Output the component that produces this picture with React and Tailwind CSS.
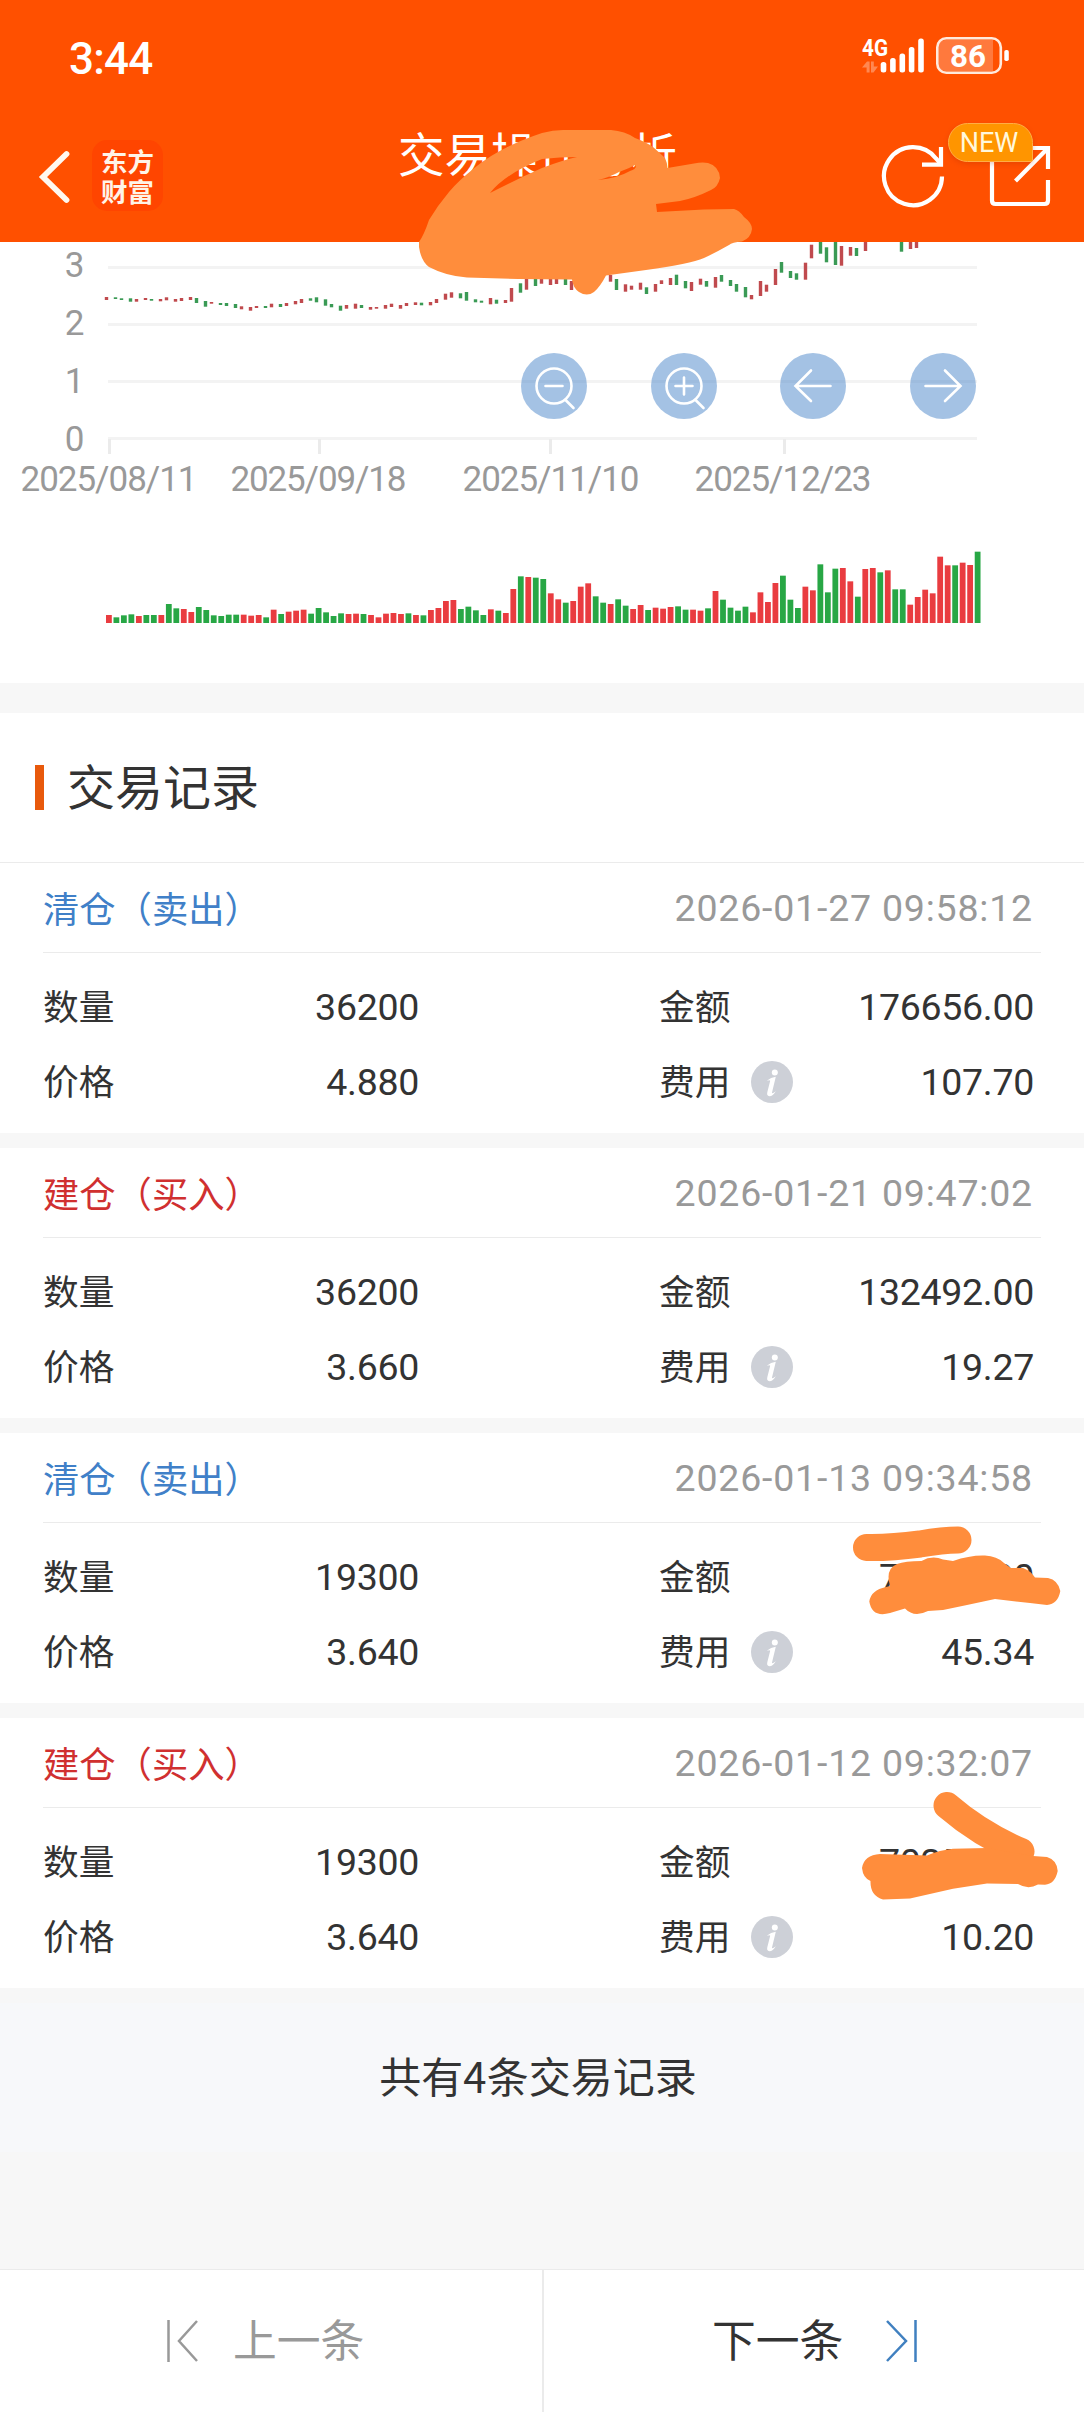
const RED = "#c04a4e";
const GREEN = "#3a9a55";

// Candle bodies: [day index, rising (r) or falling (g), top, bottom]
const candles = [
  [0, "r", 297, 300], [1, "g", 297.3, 299], [2, "g", 298.3, 300], [3, "g", 298.3, 301.7], [4, "r", 299, 301.7],
  [5, "r", 298, 300], [6, "g", 299, 300.7], [7, "r", 299, 301.3], [8, "r", 297.3, 300.3], [9, "r", 299, 301.7],
  [10, "r", 298, 301], [11, "r", 297, 300], [12, "g", 298, 303], [13, "g", 301, 306.7], [14, "r", 302, 303.7],
  [15, "g", 303, 305], [16, "g", 303, 306], [17, "g", 304, 308], [18, "r", 306.3, 309.3], [19, "r", 307, 310.7],
  [20, "r", 306, 308], [21, "g", 306, 308], [22, "r", 303.7, 307.3], [23, "g", 304, 307], [24, "r", 303, 306],
  [25, "r", 301, 304.3], [26, "r", 299, 303], [27, "g", 298.3, 300.7], [28, "g", 297.3, 302.3], [29, "g", 299.3, 305.7],
  [30, "g", 304, 307.3], [31, "g", 305.7, 310.7], [32, "r", 305, 308.7], [33, "r", 303.7, 308.7], [34, "g", 305, 308],
  [35, "r", 307, 309.7], [36, "r", 307, 308.7], [37, "r", 305, 308.7], [38, "r", 303.7, 307], [39, "r", 305, 308.7],
  [40, "r", 303, 306], [41, "r", 302.3, 305], [42, "g", 302.7, 305.3], [43, "r", 302, 305.3], [44, "r", 299, 303],
  [45, "r", 293.7, 299.7], [46, "r", 292.3, 297.7], [47, "g", 293.3, 298.3], [48, "g", 292, 300.7], [49, "g", 299.3, 302.3],
  [50, "g", 300.7, 302.7], [51, "r", 298, 304.3], [52, "g", 299.7, 303.7], [53, "r", 300, 303], [54, "r", 288, 301.7],
  [55, "g", 283.3, 292.7], [56, "r", 278, 289.7], [57, "g", 279, 286], [58, "r", 278, 283.7], [59, "r", 279, 285],
  [60, "r", 279, 284], [61, "g", 279, 285], [62, "r", 281, 290], [67, "r", 275, 281.7], [68, "g", 279, 290],
  [69, "r", 284.3, 291.7], [70, "r", 285.7, 289.7], [71, "r", 282.7, 289.7], [72, "g", 287.3, 294], [73, "r", 284, 291.7],
  [74, "r", 280.3, 284], [75, "r", 278, 285], [76, "g", 274.7, 285], [77, "g", 281, 288.3], [78, "r", 282, 291],
  [79, "r", 278.7, 284.7], [80, "g", 281, 286.7], [81, "r", 277, 287.7], [82, "g", 275, 281.7], [83, "g", 280, 286],
  [84, "g", 284, 291.7], [85, "g", 287, 297.3], [86, "r", 295, 299.3], [87, "r", 281, 296], [88, "r", 284.7, 291.7],
  [89, "r", 269, 285], [90, "g", 262, 272.7], [91, "g", 271, 278], [92, "g", 273.3, 279.7], [93, "r", 262.7, 279.7],
  [94, "r", 244.7, 258.3], [95, "g", 242, 253.7], [96, "g", 247.3, 262.3], [97, "g", 242, 265], [98, "r", 246, 265.7],
  [99, "r", 247, 255.7], [100, "g", 248, 256], [101, "r", 242, 251], [106, "g", 242, 251.7], [107, "r", 242, 249], [108, "r", 242, 248],
];

// Daily volume: colour plus bar height in thirds of a pixel
const volume =
  "r24 g17 g23 g26 r21 g24 g24 r24 g57 g44 r42 r33 g48 g39 g23 g21 g25 g25 r25 r22 r24 g17 r40 g27 r34 r37 r40 g28 g45 g32 g21 g29 r27 r28 g27 r24 r17 r28 r30 r27 g29 r24 g23 r39 r45 r66 r69 g42 g49 g38 g24 r41 g37 r30 r102 g140 r138 g136 g132 r89 r71 g61 r66 r109 r119 g80 g61 r57 g71 g52 r42 r54 g39 r46 r43 r48 g50 g40 r40 r37 g44 r96 g70 g46 g37 g49 r32 r92 r63 r120 g142 g70 g45 r109 r98 g176 g92 g163 r165 r125 g79 r162 r165 g152 r158 g101 g101 r55 r78 r100 r89 r199 r173 g173 r181 r174 g214".split(" ");

const records = [
  { kind: "sell", time: "2026-01-27 09:58:12", qty: "36200", amount: "176656.00", price: "4.880", fee: "107.70" },
  { kind: "buy", time: "2026-01-21 09:47:02", qty: "36200", amount: "132492.00", price: "3.660", fee: "19.27" },
  { kind: "sell", time: "2026-01-13 09:34:58", qty: "19300", amount: "70252.00", price: "3.640", fee: "45.34" },
  { kind: "buy", time: "2026-01-12 09:32:07", qty: "19300", amount: "70252.00", price: "3.640", fee: "10.20" },
];

function StatusBar() {
  return (
    <div className="flex h-[112px] items-center justify-between pl-[69px] pr-[74px]">
      <div className="pt-[5px] font-[Roboto] text-[44px] font-medium leading-none tracking-[-0.8px]">3:44</div>
      <svg width="150" height="44" viewBox="861 34 150 44" fill="#fff">
        <text x="863" y="56" fontFamily="Roboto" fontWeight="700" fontSize="23" textLength="26" lengthAdjust="spacingAndGlyphs">4G</text>
        <g fill="#fff" fillOpacity=".32">
          <path d="M863 67.500 868 61.500h2.600V72.500h-3v-5zM872 61.500h2.800v5h4.200L874.500 72.500H872z" />
        </g>
        <rect x="881.7" y="62" width="5.6" height="10.5" rx="2.5" />
        <rect x="891.1" y="58" width="5.6" height="14.5" rx="2.5" />
        <rect x="900.5" y="53.5" width="5.6" height="19" rx="2.5" />
        <rect x="909.8" y="47" width="5.6" height="25.5" rx="2.5" />
        <rect x="919.2" y="38.5" width="5.6" height="34" rx="2.5" />
        <path d="M946 40h48v31h-48a6.500 6.500 0 0 1-6.500-6.500v-18a6.500 6.500 0 0 1 6.500-6.500z" fillOpacity=".24" />
        <rect x="938.300" y="38.200" width="63.500" height="34.500" rx="9" fill="none" stroke="#ffeadd" strokeWidth="2.600" />
        <rect x="1005.300" y="50" width="4.500" height="11" rx="1.800" />
        <text x="951" y="67" fontFamily="Roboto" fontWeight="700" fontSize="32" textLength="36" lengthAdjust="spacingAndGlyphs">86</text>
      </svg>
    </div>
  );
}

function TitleBar() {
  return (
    <div className="relative flex h-[130px] items-start">
      <svg className="ml-[36px] mt-[36px] shrink-0" width="36" height="58" viewBox="36 148 36 58" fill="none" stroke="#fff8f0" strokeWidth="5.800">
        <path d="M66.500 154 43 177 66.500 200" strokeLinecap="round" />
      </svg>
      <div className="ml-[20px] mt-[28px] flex h-[71px] w-[71px] shrink-0 items-center justify-center rounded-[15px] bg-[#ff4500] text-[26.500px] font-bold leading-[29.500px] text-[#fff4e8]">
        <span className="w-[53px] break-all">东方财富</span>
      </div>
      <h1 className="ml-[235px] mt-[7px] w-[300px] shrink-0 whitespace-nowrap text-[46.500px] font-normal leading-[66px]">交易操作分析</h1>
      <svg className="ml-[181px] mt-[28px] shrink-0" width="70" height="70" viewBox="879 140 70 70" fill="none" stroke="#fff" strokeWidth="4.200">
        <path d="M942 176.500A29 29 0 1 1 936 158.500L941 164" />
        <path d="M941 147v17.700h-19" />
      </svg>
      <svg className="ml-[37px] mt-[28px] shrink-0" width="68" height="70" viewBox="986 140 68 70" fill="none" stroke="#fff" strokeWidth="4.200">
        <path d="M1016 148h-20q-4 0-4 4v48.500q0 3.500 3.500 3.500h49q3.500 0 3.500-3.500V180" />
        <path d="M1028 148h20v21M1048 148l-32.500 33" />
      </svg>
      <span className="absolute left-[948px] top-[11px] flex h-[39px] w-[85px] items-center justify-center rounded-[20px] rounded-br-[2px] border border-[#ffad45] bg-[#ff9500] pr-[3px] pt-[1px] font-[Roboto] text-[27px] leading-none text-[#fff8dc] shadow-[0_2px_5px_rgba(170,40,0,0.25)]">
        NEW
      </span>
    </div>
  );
}

function RoundButton({ x, children }) {
  return (
    <g transform={`translate(${x} 386)`} fill="none" stroke="#fff" strokeWidth="2.600" strokeLinecap="round">
      <circle r="33" fill="#4a86c9" fillOpacity=".5" stroke="none" />
      {children}
    </g>
  );
}

function Chart() {
  return (
    <svg className="block bg-white" width="1084" height="441" viewBox="0 242 1084 441">
      <g fill="#f3f3f3">
        <rect x="108" y="266" width="869" height="3" />
        <rect x="108" y="323" width="869" height="3" />
        <rect x="108" y="380" width="869" height="3" />
        <rect x="108" y="437" width="869" height="3" />
      </g>
      <g fill="#ebebeb">
        <rect x="108" y="439" width="3" height="15" />
        <rect x="318" y="439" width="3" height="15" />
        <rect x="549" y="439" width="3" height="15" />
        <rect x="783" y="439" width="3" height="15" />
      </g>
      <g fontFamily="Roboto" fontSize="35" fill="#999">
        <text x="84.500" y="277" textAnchor="end">3</text>
        <text x="84.500" y="335" textAnchor="end">2</text>
        <text x="84.500" y="393" textAnchor="end">1</text>
        <text x="84.500" y="451" textAnchor="end">0</text>
        <text x="20.500" y="491" textLength="177">2025/08/11</text>
        <text x="230.500" y="491" textLength="176">2025/09/18</text>
        <text x="462.500" y="491" textLength="177">2025/11/10</text>
        <text x="694.500" y="491" textLength="177">2025/12/23</text>
      </g>
      {candles.map(([i, c, top, bottom]) => (
        <rect key={i} x={104.8 + 3 * Math.round(i * 2.5)} y={top} width="3.400" height={bottom - top} fill={c === "r" ? RED : GREEN} />
      ))}
      {volume.map((v, i) => {
        const h = Number(v.slice(1)) / 3;
        return <rect key={i} x={106 + i * 7.489} y={623 - h} width="5.800" height={h} fill={v[0] === "r" ? "#e93c40" : "#28a745"} />;
      })}
      <RoundButton x={554}>
        <circle cx="0" r="17.500" />
        <path d="M-8.500 0h17M11.500 14l8 8" />
      </RoundButton>
      <RoundButton x={684}>
        <circle r="17.500" />
        <path d="M-8.500 0h17M0-8.500v17M11.500 14l8 8" />
      </RoundButton>
      <RoundButton x={813}>
        <path d="M-2-15.500-17.500 0-2 15M-17.500 0h35" />
      </RoundButton>
      <RoundButton x={943}>
        <path d="M2-15.500 17.500 0 2 15M17.500 0h-35" />
      </RoundButton>
    </svg>
  );
}

function InfoIcon() {
  return (
    <svg className="ml-[21px]" width="42" height="42" viewBox="0 0 42 42">
      <circle cx="21" cy="21" r="21" fill="#cdd0d7" />
      <circle cx="23.800" cy="11.500" r="3" fill="#fff" />
      <path d="M15.800 19.800Q20 16.500 24.800 15.800L21 31.500Q20.800 33.300 24.800 30.200 22 35.200 18.300 35.200 15.500 35 16.300 31.300L19.200 19.800Q19 18.800 15.800 19.800Z" fill="#fff" />
    </svg>
  );
}

function Num({ children }) {
  return <span className="font-[Roboto] text-[37.500px] tracking-[-0.300px]">{children}</span>;
}

function Label({ children }) {
  return <span className="pb-[3px]">{children}</span>;
}

function Record({ record }) {
  const sell = record.kind === "sell";
  return (
    <article className="h-[270px] bg-white text-[35.700px] leading-[72px] text-[#333]">
      <div className="ml-[43px] mr-[43px] flex h-[90px] items-center justify-between border-b border-[#ebebeb] pr-[8px]">
        <span className={sell ? "pb-[2px] text-[36.300px] text-[#4080c8]" : "pb-[2px] text-[36.300px] text-[#d03030]"}>{sell ? "清仓（卖出）" : "建仓（买入）"}</span>
        <span className="font-[Roboto] text-[37.500px] tracking-[0.800px] text-[#999]">{record.time}</span>
      </div>
      <div className="ml-[43px] mr-[50px] grid grid-cols-[376px_615px] justify-between pt-[16px]">
        <div className="flex h-[75px] items-center justify-between">
          <Label>数量</Label>
          <Num>{record.qty}</Num>
        </div>
        <div className="flex h-[75px] items-center justify-between pl-[240px]">
          <Label>金额</Label>
          <Num>{record.amount}</Num>
        </div>
        <div className="flex h-[75px] items-center justify-between">
          <Label>价格</Label>
          <Num>{record.price}</Num>
        </div>
        <div className="flex h-[75px] items-center pl-[240px]">
          <Label>费用</Label>
          <InfoIcon />
          <span className="ml-auto flex"><Num>{record.fee}</Num></span>
        </div>
      </div>
    </article>
  );
}

function Scribbles() {
  return (
    <svg className="pointer-events-none absolute left-0 top-0" width="1084" height="2412" viewBox="0 0 1084 2412" fill="#ff8d3c">
      <path
        fillRule="evenodd"
        d="M542 133Q553 130 563 130H611Q625 131 635 138Q646 142 653 147Q662 155 665 158Q667 162 667.500 168L694 163.500Q702 162 708 163Q719 166 720 178Q718 187 711 190Q695 198 680 201L656 204 657 212 704 209.500 734 209Q739 210 744 217Q752 223 752 229Q751 238 742 241.500Q732 242 729 245Q715 253 704 258Q690 264 646 270L606 275.500Q600 287 594 292Q587 297 579 292Q573 288 572 279.500L518 279 467 277.500Q446 276 429 267Q421 261 419 247V242Q424 235 429 220Q438 205 449 192Q458 181 475 167.500Q500 147 542 133ZM490 193Q505 174 542 159Q560 157 577 157Q563 160 542 168Q515 180 490 193ZM598 180Q610 177 619 172Q630 168 635 165Q638 168 630 171Q618 178 598 180Z"
      />
      <g fill="none" stroke="#ff8d3c" strokeWidth="27" strokeLinecap="round">
        <path d="M866.500 1547.500Q890 1548 920 1544 943 1540 958 1540" />
        <path d="M947 1805.500Q980 1834 1021 1851.500" />
      </g>
      <path d="M869.300 1601.500Q871 1590 886 1587L890 1586Q885 1569 897 1564Q905 1561 921.500 1561Q932 1555 943 1559.500L953 1561Q970 1555 985 1555.500Q997 1556 1004 1563L1011 1568 1023 1568Q1031 1571 1035 1577.500L1048 1578Q1058 1580 1060.300 1591Q1058 1604 1047 1605L1030 1603 995 1599 967 1605 943 1610 928 1611Q914 1618 905 1608.500L890 1613Q872 1618 869.300 1601.500Z" />
      <path d="M862 1868Q864 1855 880 1854L927 1855.500Q940 1850 953 1848.700L987 1848 1033 1856 1047 1857Q1057 1860 1057.700 1871Q1055 1884 1045 1884.700L1038 1884.500Q1028 1890 1018 1884L987 1883.500 953 1888.700 910 1898.500 883 1899.500Q870 1896 870.500 1881Q863 1878 862 1868Z" />
    </svg>
  );
}

export default function App() {
  return (
    <main className="relative h-[2412px] w-[1084px] overflow-hidden bg-[#f7f7f7] font-['Noto_Sans_CJK_SC',sans-serif]">
      <header className="h-[242px] bg-[#ff5000] text-white">
        <StatusBar />
        <TitleBar />
      </header>
      <Chart />
      <section className="mt-[30px] flex h-[150px] items-center border-b border-[#ebebeb] bg-white pl-[35px]">
        <span className="h-[45px] w-[9px] bg-[#e8590c]" />
        <h2 className="ml-[23px] pb-[7px] text-[48px] font-normal leading-none text-[#333]">交易记录</h2>
      </section>
      <section className="flex flex-col gap-[15px]">
        {records.map((r) => (
          <Record key={r.time} record={r} />
        ))}
      </section>
      <p className="mt-[15px] h-[149px] bg-[#f7f8fa] pr-[8px] text-center text-[42px] leading-[144px] text-[#333]">共有4条交易记录</p>
      <nav className="mt-[117px] flex h-[143px] border-t border-[#ebebeb] bg-white text-[43.800px]">
        <div className="flex w-[544px] items-center border-r-2 border-[#ebebeb] pl-[166px] text-[#999]">
          <svg width="34" height="44" viewBox="0 0 34 44" fill="none" stroke="#999" strokeWidth="2.500">
            <path d="M2.500 1v42M31 2 13 22 31 42" />
          </svg>
          <span className="ml-[33px] pb-[4px]">上一条</span>
        </div>
        <div className="flex flex-1 items-center pl-[168px] text-[#333]">
          <span className="pb-[4px]">下一条</span>
          <svg className="ml-[41px]" width="34" height="44" viewBox="0 0 34 44" fill="none" stroke="#4080c0" strokeWidth="2.500">
            <path d="M31.500 1v42M3 2 22 22 3 42" />
          </svg>
        </div>
      </nav>
      <Scribbles />
    </main>
  );
}
